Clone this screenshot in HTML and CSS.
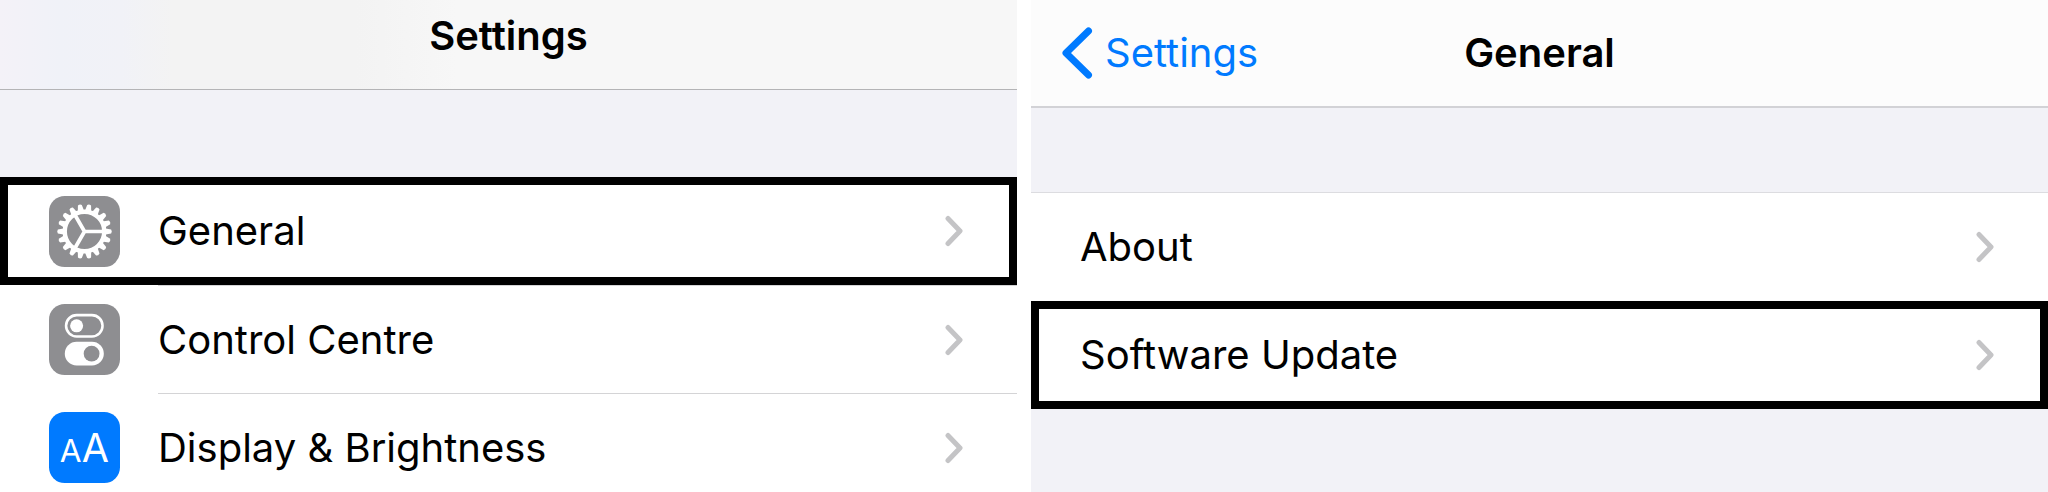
FILE: index.html
```html
<!DOCTYPE html>
<html lang="en">
<head>
  <meta charset="UTF-8" />
  <meta name="viewport" content="width=device-width, initial-scale=1.0" />
  <title>Settings - General - Software Update</title>
  <link rel="stylesheet" href="styles.css">
</head>
<body>
  <!-- shared chevron for every row -->
  <svg class="sprite" aria-hidden="true">
    <symbol id="chevron" viewBox="0 0 18 32">
      <path d="M3 3.5 L15 16 L3 28.5" fill="none" stroke="#c4c4c6" stroke-width="5" stroke-linecap="round" stroke-linejoin="round" />
    </symbol>
  </svg>

  <div class="screens">
    <section class="screen">
      <header class="bar bar-scrolled">
        <h1 class="title">Settings</h1>
      </header>

      <nav class="list list-icons">
        <a href="#general" class="row highlight">
          <svg class="icon" viewBox="0 0 72 72" aria-hidden="true">
            <defs>
              <path id="tooth" d="M56 32.6 L63 34 Q64.4 36 63 38 L56 39.4 Z" />
              <g id="teeth">
                <use href="#tooth" />
                <use href="#tooth" transform="rotate(20 36 36)" />
                <use href="#tooth" transform="rotate(40 36 36)" />
              </g>
            </defs>
            <rect width="72" height="72" rx="16" fill="#8e8e91" />
            <g fill="#fff">
              <use href="#teeth" />
              <use href="#teeth" transform="rotate(60 36 36)" />
              <use href="#teeth" transform="rotate(120 36 36)" />
              <use href="#teeth" transform="rotate(180 36 36)" />
              <use href="#teeth" transform="rotate(240 36 36)" />
              <use href="#teeth" transform="rotate(300 36 36)" />
            </g>
            <g fill="none" stroke="#fff">
              <circle cx="36" cy="36" r="20" stroke-width="4.4" />
              <path d="M36 36 H55 M36 36 L26.5 19.5 M36 36 L26.5 52.5" stroke-width="3.8" />
            </g>
          </svg>
          <span class="row-body">
            <span>General</span>
            <svg class="chevron" aria-hidden="true"><use href="#chevron" /></svg>
          </span>
        </a>
        <a href="#control-centre" class="row">
          <svg class="icon" viewBox="0 0 72 72" aria-hidden="true">
            <rect width="72" height="72" rx="16" fill="#8e8e91" />
            <rect x="17.3" y="11.3" width="37" height="21.6" rx="10.8" fill="none" stroke="#fff" stroke-width="2.6" />
            <circle cx="28" cy="22.1" r="6.6" fill="#fff" />
            <rect x="16" y="38.4" width="39.6" height="24" rx="12" fill="#fff" />
            <circle cx="43.2" cy="50.4" r="8" fill="#8e8e91" />
          </svg>
          <span class="row-body">
            <span>Control Centre</span>
            <svg class="chevron" aria-hidden="true"><use href="#chevron" /></svg>
          </span>
        </a>
        <a href="#display" class="row">
          <svg class="icon" viewBox="0 0 72 72" aria-hidden="true">
            <rect width="72" height="72" rx="16" fill="#007aff" />
            <text class="icon-text-small" x="22" y="51">A</text>
            <text class="icon-text" x="47" y="51">A</text>
          </svg>
          <span class="row-body">
            <span>Display &amp; Brightness</span>
            <svg class="chevron" aria-hidden="true"><use href="#chevron" /></svg>
          </span>
        </a>
      </nav>
    </section>

    <section class="screen">
      <header class="bar">
        <a href="#settings" class="back">
          <svg class="back-arrow" viewBox="0 0 32 52" aria-hidden="true">
            <path d="M27.5 4 L5 26 L27.5 48" fill="none" stroke="#007aff" stroke-width="7" stroke-linecap="round" stroke-linejoin="round" />
          </svg>
          Settings
        </a>
        <h1 class="title">General</h1>
      </header>

      <nav class="list list-plain">
        <a href="#about" class="row">
          <span class="row-body">
            <span>About</span>
            <svg class="chevron" aria-hidden="true"><use href="#chevron" /></svg>
          </span>
        </a>
        <a href="#software-update" class="row highlight">
          <span class="row-body">
            <span>Software Update</span>
            <svg class="chevron" aria-hidden="true"><use href="#chevron" /></svg>
          </span>
        </a>
      </nav>
    </section>
  </div>
</body>
</html>
```

FILE: styles.css
```css
* {
  box-sizing: border-box;
}

body {
  margin: 0;
  background: #fff;
  color: #000;
  font-family: Inter, "Liberation Sans", sans-serif;
  font-size: 40px;
  line-height: 48px;
}

a {
  color: inherit;
  text-decoration: none;
}

.sprite {
  display: none;
}

.screens {
  display: grid;
  grid-template-columns: 1fr 1fr;
  gap: 14px;
  height: 100vh;
  overflow: hidden;
}

.screen {
  background: #f2f2f7;
}

/* top bars */
.bar {
  display: grid;
  grid-template-columns: 1fr auto 1fr;
  align-items: center;
  height: 108px;
  padding: 0 30px;
  background: #fcfcfc;
  border-bottom: 2px solid #d2d2d6;
}

.bar-scrolled {
  height: 90px;
  padding-bottom: 18px;
  background: linear-gradient(90deg, #f4f2f8 0, #f0f2f8 6%, #f1f2f7 12%, #f3f3f3 17%, #f3f3f3 35%, #f7f7f7 45%);
  border-bottom: 1px solid #b4b4b6;
}

.title {
  grid-column: 2;
  margin: 0;
  font-size: 40px;
  font-weight: 600;
}

.back {
  display: flex;
  align-items: center;
  gap: 12px;
  color: #007aff;
}

.back-arrow {
  width: 32px;
  height: 52px;
}

/* lists */
.list {
  background: #fff;
}

.list-icons {
  margin-top: 87px;
}

.list-plain {
  margin-top: 84px;
  border-top: 1px solid #dcdce0;
}

.row {
  display: flex;
  height: 108px;
  align-items: center;
  padding-left: 49px;
}

.row-body {
  flex: 1;
  display: flex;
  align-items: center;
  justify-content: space-between;
  align-self: stretch;
  padding-right: 54px;
}

.list-icons .row + .row .row-body {
  border-top: 1px solid #d4d4d6;
}

.icon {
  width: 71px;
  height: 71px;
  margin-right: 38px;
}

.icon-text,
.icon-text-small {
  fill: #fff;
  font-size: 40px;
  font-weight: 400;
  text-anchor: middle;
}

.icon-text-small {
  font-size: 32px;
}

.chevron {
  width: 18px;
  height: 32px;
}

.highlight {
  padding-left: 41px;
  border: 8px solid #000;
}

.highlight .row-body {
  padding-right: 46px;
}
```
